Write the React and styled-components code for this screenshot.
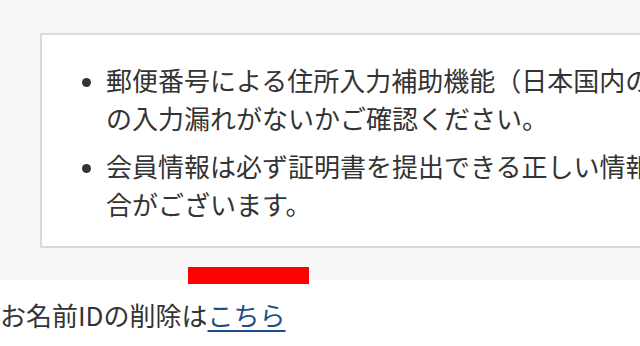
import React from "react";
import styled, { createGlobalStyle } from "styled-components";

const Global = createGlobalStyle`
  html, body { margin: 0; padding: 0; background: #ffffff; overflow: hidden; }
  body { font-family: "Noto Sans CJK JP", "Noto Sans", sans-serif; color: #333333; }
`;

const Page = styled.div`
  width: 640px;
  height: 346px;
  position: relative;
  overflow: hidden;
`;

const NoticeArea = styled.section`
  background: #f7f7f7;
  padding: 33px 0 32px 40px;
`;

const NoticeBox = styled.div`
  width: 760px;
  background: #ffffff;
  border: 2px solid #dadada;
  box-sizing: border-box;
  padding: 26px 24px 23px 24px;
`;

const List = styled.ul`
  margin: 0;
  padding: 0 0 0 40px;
  list-style: disc;
  display: flex;
  flex-direction: column;
  gap: 10px;
`;

const Item = styled.li`
  font-size: 26px;
  line-height: 38px;
  color: #333333;
  &::marker { font-size: 22px; }
`;

const Nowrap = styled.span`
  white-space: nowrap;
`;

const Footer = styled.p`
  margin: 16px 0 0 0;
  font-size: 26px;
  line-height: 38px;
  color: #333333;
  white-space: nowrap;
`;

const Link = styled.a`
  color: #1d4e89;
  text-decoration: underline;
  text-decoration-thickness: 2px;
  text-underline-offset: 4px;
`;

const Redaction = styled.div`
  position: absolute;
  left: 188px;
  top: 267px;
  width: 121px;
  height: 17px;
  background: #ff0000;
`;

export default function App() {
  return (
    <Page>
      <Global />
      <NoticeArea>
        <NoticeBox>
          <List>
            <Item>
              <Nowrap>郵便番号による住所入力補助機能（日本国内の住所）</Nowrap>
              <br />
              <Nowrap>の入力漏れがないかご確認ください。</Nowrap>
            </Item>
            <Item>
              <Nowrap>会員情報は必ず証明書を提出できる正しい情報を</Nowrap>
              <br />
              <Nowrap>合がございます。</Nowrap>
            </Item>
          </List>
        </NoticeBox>
      </NoticeArea>
      <Footer>
        お名前IDの削除は<Link href="#">こちら</Link>
      </Footer>
      <Redaction />
    </Page>
  );
}
